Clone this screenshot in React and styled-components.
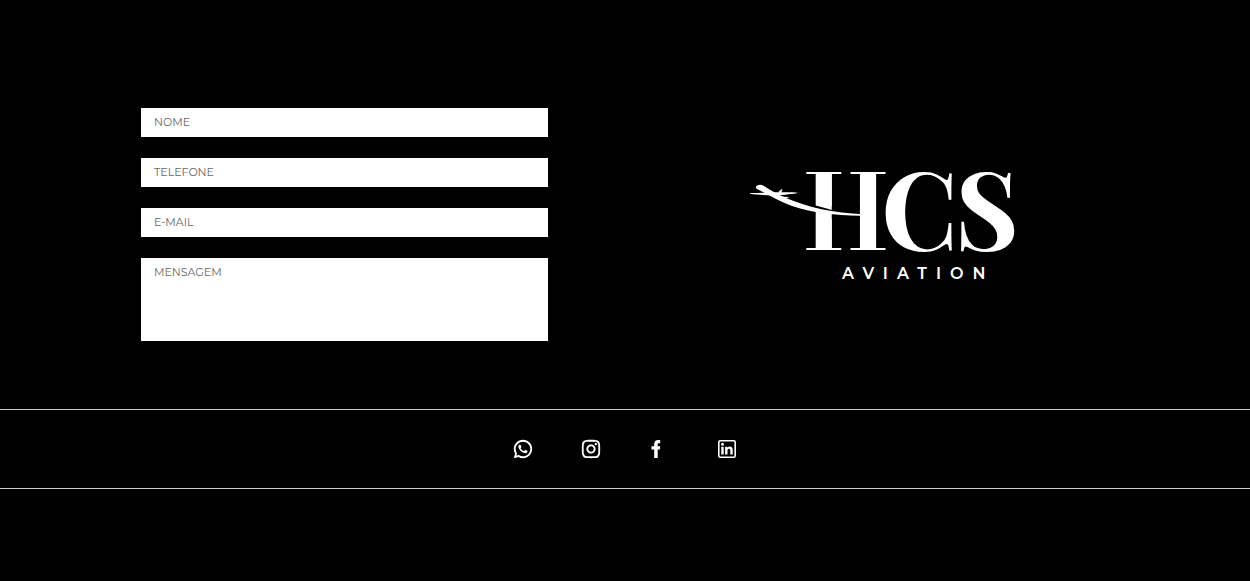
import React from "react";
import styled, { createGlobalStyle } from "styled-components";
import { RiWhatsappLine, RiInstagramLine } from "react-icons/ri";

const GlobalStyle = createGlobalStyle`
  *, *::before, *::after { box-sizing: border-box; }
  body {
    margin: 0;
    background: #000;
    color: #fff;
    font-family: Montserrat, Inter, sans-serif;
  }
`;

const Contact = styled.main`
  display: grid;
  grid-template-columns: 9fr 10fr;
  column-gap: 109px;
  padding: 108px 141px 68px;
`;

const Form = styled.form`
  display: flex;
  flex-direction: column;
  gap: 21px;
`;

const Input = styled.input`
  width: 100%;
  height: 29px;
  padding: 0 13px 2px;
  border: 0;
  border-radius: 0;
  background: #fff;
  color: #222;
  font: 400 11px/16px Montserrat, Inter, sans-serif;

  &::placeholder { color: #666; opacity: 1; }
`;

const Message = styled(Input)`
  display: block;
  height: 83px;
  padding: 6px 13px;
  resize: none;
`;

const Brand = styled.div`
  display: flex;
  justify-content: center;
  align-items: center;
`;

const Logo = styled.svg`
  display: block;
  width: 268px;
  height: 116px;
  fill: #fff;
  overflow: visible;
`;

const Monogram = styled.text`
  font: 700 109px "Playfair Display", "Liberation Serif", serif;
`;

const Initial = styled.tspan`
  font: 700 104px "Bodoni Moda", "Liberation Serif", serif;
`;

const Tagline = styled.text`
  font: 600 16px Montserrat, Lato, sans-serif;
  letter-spacing: 9px;
`;

const Social = styled.footer`
  display: flex;
  justify-content: center;
  align-items: center;
  gap: 46px;
  height: 80px;
  border-top: 1px solid #ccc;
  border-bottom: 1px solid #ccc;
`;

const SocialLink = styled.a`
  display: flex;
  justify-content: center;
  width: 22px;
  color: #fff;
`;

const fields = [
  { name: "nome", label: "NOME", type: "text" },
  { name: "telefone", label: "TELEFONE", type: "tel" },
  { name: "email", label: "E-MAIL", type: "email" },
];

function FacebookIcon({ size }) {
  return (
    <svg width={size} height={size} viewBox="0 0 22 22" fill="currentColor" aria-hidden="true">
      <path d="M6.200 20V11.500H3.500V8.200H6.200V6.200C6.200 3.500 7.800 2 10.200 2C11.200 2 12.200 2.150 12.200 2.150V5.200H11C9.900 5.200 9.700 5.800 9.700 6.500V8.200H12.200L11.800 11.500H9.700V20Z" />
    </svg>
  );
}

function LinkedinIcon({ size }) {
  return (
    <svg width={size} height={size} viewBox="0 0 22 22" fill="currentColor" aria-hidden="true">
      <rect x="2.800" y="2.800" width="16.400" height="16.400" rx="1.500" fill="none" stroke="currentColor" strokeWidth="1.600" />
      <circle cx="6.500" cy="6.200" r="1.500" />
      <path d="M5.300 8.700H7.700V16.500H5.300ZM9.100 8.700H11.400V9.800C11.800 9.100 12.600 8.500 13.700 8.500C16 8.500 16.700 10.200 16.700 12.200V16.500H14.300V12.700C14.300 11.600 14 10.700 12.900 10.700C11.800 10.700 11.500 11.600 11.500 12.700V16.500H9.100Z" />
    </svg>
  );
}

const networks = [
  { label: "WhatsApp", Icon: RiWhatsappLine },
  { label: "Instagram", Icon: RiInstagramLine },
  { label: "Facebook", Icon: FacebookIcon },
  { label: "LinkedIn", Icon: LinkedinIcon },
];

function BrandLogo() {
  return (
    <Logo viewBox="749 166 268 116" role="img" aria-label="HCS Aviation">
      <Monogram y="249">
        <Initial x="804">H</Initial>
        <tspan x="881 955">CS</tspan>
      </Monogram>
      {/* opening between the stems, crossed by the flight trail */}
      <path fill="#000" d="M831.800 205H859.800V218H831.800Z" />
      <path fill="#000" d="M812 203.500L834 209.500V213L812 209Z" />
      <path d="M756 186C757 183.500 761 183 764 185C770 189 777 193 786 197C808 206.500 833 212 864 213.300V214.600C839 215 812 212 792 205C778 200 767 193 758 188.500C756.500 188 756 187.500 756 186Z" />
      <path d="M750 192C756 192 762 191.500 768 191.700L775 194.500C767 194.300 757 194 750 192.800Z" />
      <path d="M772 191.300C781 191.500 790 190.800 798 191.700C797 192.600 788 193.200 778 194.400Z" />
      <path d="M778 191.300L781.500 188.200L782.500 188.500L781 192Z" />
      <path d="M779 195.500L789 196L788.500 196.800L782 197.500Z" />
      <Tagline x="842" y="278">AVIATION</Tagline>
    </Logo>
  );
}

export default function App() {
  return (
    <>
      <GlobalStyle />
      <Contact>
        <Form>
          {fields.map(({ name, label, type }) => (
            <Input key={name} name={name} type={type} placeholder={label} aria-label={label} />
          ))}
          <Message as="textarea" name="mensagem" placeholder="MENSAGEM" aria-label="MENSAGEM" />
        </Form>
        <Brand>
          <BrandLogo />
        </Brand>
      </Contact>
      <Social>
        {networks.map(({ label, Icon }) => (
          <SocialLink key={label} href="#" aria-label={label}>
            <Icon size={22} />
          </SocialLink>
        ))}
      </Social>
    </>
  );
}
